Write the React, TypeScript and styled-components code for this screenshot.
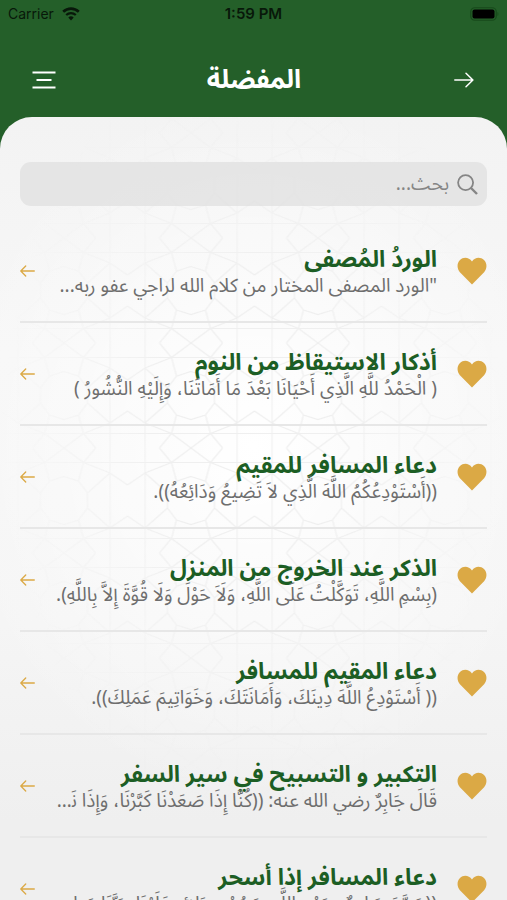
import React from "react";
import styled, { createGlobalStyle } from "styled-components";

const green = "#245f29";
const titleGreen = "#1c5e24";
const gold = "#dba945";
const arabic = '"Noto Sans Arabic", "Noto Sans", "DejaVu Sans", sans-serif';
const latin = 'Inter, Roboto, sans-serif';

const GlobalStyle = createGlobalStyle`
  *, *::before, *::after { box-sizing: border-box; }
  body { margin: 0; background: ${green}; }
`;

const Screen = styled.div`
  display: flex;
  flex-direction: column;
  height: 100vh;
  overflow: hidden;
  background: ${green};
  font-family: ${arabic};
`;

const StatusBar = styled.div`
  display: grid;
  grid-template-columns: 1fr auto 1fr;
  align-items: center;
  height: 28px;
  padding: 0 8px;
  color: #08180a;
  font-family: ${latin};
  font-size: 14px;
  line-height: 20px;
`;

const Carrier = styled.div`
  display: flex;
  align-items: center;
  gap: 8px;
`;

const Clock = styled.time`
  font-size: 15px;
  font-weight: 600;
`;

const BatterySlot = styled.div`
  display: flex;
  justify-content: flex-end;
`;

const NavBar = styled.header`
  display: grid;
  grid-template-columns: 48px 1fr 48px;
  align-items: center;
  height: 89px;
  padding: 14px 19px 0 20px;
`;

const NavButton = styled.button`
  display: flex;
  align-items: center;
  justify-content: center;
  height: 48px;
  padding: 0;
  border: 0;
  background: none;
  color: #fff;
  cursor: pointer;
`;

const PageTitle = styled.h1`
  margin: 0;
  color: #fff;
  font-size: 26px;
  font-weight: 700;
  line-height: 40px;
  text-align: center;
`;

const Panel = styled.main`
  position: relative;
  display: flex;
  flex: 1;
  flex-direction: column;
  gap: 14px;
  min-height: 0;
  padding: 45px 20px 0;
  overflow: hidden;
  border-radius: 32px 32px 0 0;
  background:
    radial-gradient(ellipse 60% 45% at 50% 42%, #ffffff 0%, rgba(255, 255, 255, 0) 100%),
    linear-gradient(#f3f3f3, #f7f7f7 30%, #f5f5f5 65%, #efefef 90%);
`;

const Ornament = styled.svg`
  position: absolute;
  inset: 0;
  width: 100%;
  height: 100%;
  pointer-events: none;
`;

const SearchBox = styled.label`
  position: relative;
  display: flex;
  flex: none;
  align-items: center;
  gap: 8px;
  height: 44px;
  padding: 0 9px;
  border-radius: 11px;
  background: rgba(222, 222, 222, 0.7);
  color: #858585;
`;

const SearchInput = styled.input`
  flex: 1;
  min-width: 0;
  height: 44px;
  padding: 0;
  border: 0;
  outline: 0;
  background: none;
  color: #555;
  font-family: ${arabic};
  font-size: 19px;

  &::placeholder {
    color: #858585;
    opacity: 1;
  }
`;

const List = styled.ul`
  position: relative;
  flex: 1;
  min-height: 0;
  margin: 0;
  padding: 0;
  overflow-y: auto;
  list-style: none;
  scrollbar-width: none;
`;

const Row = styled.li`
  display: flex;
  align-items: center;
  gap: 20px;
  height: 103px;
  border-bottom: 2px solid #e7e7e7;
`;

const HeartButton = styled.button`
  display: flex;
  flex: none;
  width: 30px;
  padding: 0;
  border: 0;
  background: none;
  color: ${gold};
  cursor: pointer;
`;

const RowLink = styled.a`
  display: flex;
  flex: 1;
  align-items: center;
  gap: 18px;
  min-width: 0;
  color: ${gold};
  text-decoration: none;
`;

const RowText = styled.div`
  flex: 1;
  min-width: 0;
  padding-top: 2px;
`;

const RowTitle = styled.h2`
  margin: 0;
  color: ${titleGreen};
  font-size: 23px;
  font-weight: 700;
  line-height: 28px;
  white-space: nowrap;
`;

const RowExcerpt = styled.p`
  margin: -5px 0;
  padding: 4px 0;
  overflow: hidden;
  color: #6e6e6e;
  font-size: 19px;
  font-weight: 400;
  line-height: 26px;
  text-overflow: ellipsis;
  white-space: nowrap;
`;

const items = [
  { title: "الوردُ المُصفى", text: '"الورد المصفى المختار من كلام الله لراجي عفو ربه...' },
  { title: "أذكار الاستيقاظ من النوم", text: "( الْحَمْدُ للَّهِ الَّذِي أَحْيَانَا بَعْدَ مَا أَمَاتَنَا، وَإِلَيْهِ النُّشُورُ )" },
  { title: "دعاء المسافر للمقيم", text: "((أَسْتَوْدِعُكُمُ اللَّهَ الَّذِي لاَ تَضِيعُ وَدَائِعُهُ))." },
  { title: "الذكر عند الخروج من المنزل", text: "(بِسْمِ اللَّهِ، تَوَكَّلْتُ عَلَى اللَّهِ، وَلَاَ حَوْلَ وَلَا قُوَّةَ إِلاَّ بِاللَّهِ)." },
  { title: "دعاء المقيم للمسافر", text: "(( أَسْتَوْدِعُ اللَّهَ دِينَكَ، وَأَمَانَتَكَ، وَخَوَاتِيمَ عَمَلِكَ))." },
  { title: "التكبير و التسبيح في سير السفر", text: "قَالَ جَابِرٌ رضي الله عنه: ((كُنَّا إِذَا صَعَدْنَا كَبَّرْنَا، وَإِذَا نَزَلْنَا سَبَّحْنَا))." },
  { title: "دعاء المسافر إذا أسحر", text: "((سَمَّعَ سَامِعٌ بِحَمْدِ اللَّهِ، وَحُسْنِ بَلائِهِ عَلَيْنَا، رَبَّنَا صَاحِبْنَا، وَأَفْضِلْ عَلَيْنَا))." },
];

const WifiIcon = () => (
  <svg width="18" height="14" viewBox="0 0 18 14" fill="none" stroke="currentColor" aria-hidden="true">
    <path d="M1.2 4.8a11.2 11.2 0 0 1 15.6 0" strokeWidth="2.6" />
    <path d="M4.2 8a7 7 0 0 1 9.6 0" strokeWidth="2.2" />
    <path d="M9 13.6 6.3 10.6a4 4 0 0 1 5.4 0z" fill="currentColor" stroke="none" />
  </svg>
);

const BatteryIcon = () => (
  <svg width="29" height="14" viewBox="0 0 29 14" aria-hidden="true">
    <rect x="0.75" y="0.75" width="25.5" height="12.5" rx="4" fill="none" stroke="#174a1b" strokeWidth="1.2" />
    <rect x="2.5" y="2.5" width="22" height="9" rx="2" fill="#000" />
    <path d="M27.5 5c1.2.5 1.2 3.5 0 4z" fill="#174a1b" />
  </svg>
);

const MenuIcon = () => (
  <svg width="24" height="18" viewBox="0 0 24 18" stroke="currentColor" strokeWidth="1.8" aria-hidden="true">
    <path d="M.5 1.5h23M4.5 9h15M.5 16.5h23" />
  </svg>
);

const BackIcon = () => (
  <svg width="20" height="16" viewBox="0 0 20 16" fill="none" stroke="currentColor" strokeWidth="1.5" strokeLinecap="round" strokeLinejoin="round" aria-hidden="true">
    <path d="M.8 8h18M12 1.2 18.9 8 12 14.8" />
  </svg>
);

const SearchIcon = () => (
  <svg width="21" height="21" viewBox="0 0 21 21" fill="none" stroke="currentColor" aria-hidden="true">
    <circle cx="8.6" cy="8.6" r="7.5" strokeWidth="1.8" />
    <path d="m14 14 6 6" strokeWidth="2.4" />
  </svg>
);

const HeartIcon = () => (
  <svg width="30" height="28" viewBox="0 0 30 28" fill="currentColor" aria-hidden="true">
    <path d="M15 27.5 2.9 15.2C-.3 11.4-.2 6.1 3 3 6.5-.4 12 .3 15 4.4 18-.1 23.500-.4 27 3c3.2 3.1 3.3 8.4.1 12.2z" />
  </svg>
);

const ForwardIcon = () => (
  <svg width="15" height="12" viewBox="0 0 15 12" fill="none" stroke="currentColor" strokeWidth="1.3" strokeLinecap="round" strokeLinejoin="round" aria-hidden="true">
    <path d="M14.3 6H.9M5.7 1 .8 6l4.9 5" />
  </svg>
);

const StarLattice = () => (
  <Ornament aria-hidden="true">
    <defs>
      <pattern id="lattice" x="0.5" y="16" width="127" height="105" patternUnits="userSpaceOnUse">
        <g fill="none" stroke="#efefef" strokeWidth="1.2">
          <path d="M17.5 0v105M109.5 0v105M0 14.5h127M0 90.5h127" />
          <path d="M63.5 28.5 78 33.2 87 45v15l-9 12-14.5 4.5L49 72l-9-12V45l9-11.8z" />
          <path d="M0 37 17.5 25 40 45M0 68l17.5 12L40 60M127 37 109.5 25 87 45M127 68l-17.5 12L87 60" />
          <path d="M49 33 44 14.5 32 0M78 33l5-18.5L95 0M49 72l-5 18.5L32 105M78 72l5 18.5L95 105" />
          <path d="M44 14.5 63.5 0 83 14.5M44 90.5 63.5 105 83 90.5M17.5 25 44 14.5M109.5 25 83 14.5M17.5 80 44 90.5M109.5 80 83 90.5" />
        </g>
      </pattern>
      <radialGradient id="fade" cx="0.5" cy="0.4" r="0.5">
        <stop offset="0.4" stopColor="#fff" />
        <stop offset="1" stopColor="#000" />
      </radialGradient>
      <mask id="latticeMask">
        <rect width="100%" height="100%" fill="url(#fade)" />
      </mask>
    </defs>
    <rect width="100%" height="100%" fill="url(#lattice)" mask="url(#latticeMask)" />
  </Ornament>
);

export default function App() {
  return (
    <Screen>
      <GlobalStyle />
      <StatusBar>
        <Carrier>
          Carrier
          <WifiIcon />
        </Carrier>
        <Clock>1:59 PM</Clock>
        <BatterySlot>
          <BatteryIcon />
        </BatterySlot>
      </StatusBar>
      <NavBar>
        <NavButton type="button" aria-label="القائمة">
          <MenuIcon />
        </NavButton>
        <PageTitle dir="rtl">المفضلة</PageTitle>
        <NavButton type="button" aria-label="رجوع">
          <BackIcon />
        </NavButton>
      </NavBar>
      <Panel dir="rtl">
        <StarLattice />
        <SearchBox>
          <SearchIcon />
          <SearchInput type="search" placeholder="بحث..." aria-label="بحث" />
        </SearchBox>
        <List>
          {items.map((item) => (
            <Row key={item.title}>
              <HeartButton type="button" aria-label="إزالة من المفضلة">
                <HeartIcon />
              </HeartButton>
              <RowLink href="#">
                <RowText>
                  <RowTitle>{item.title}</RowTitle>
                  <RowExcerpt>{item.text}</RowExcerpt>
                </RowText>
                <ForwardIcon />
              </RowLink>
            </Row>
          ))}
        </List>
      </Panel>
    </Screen>
  );
}
